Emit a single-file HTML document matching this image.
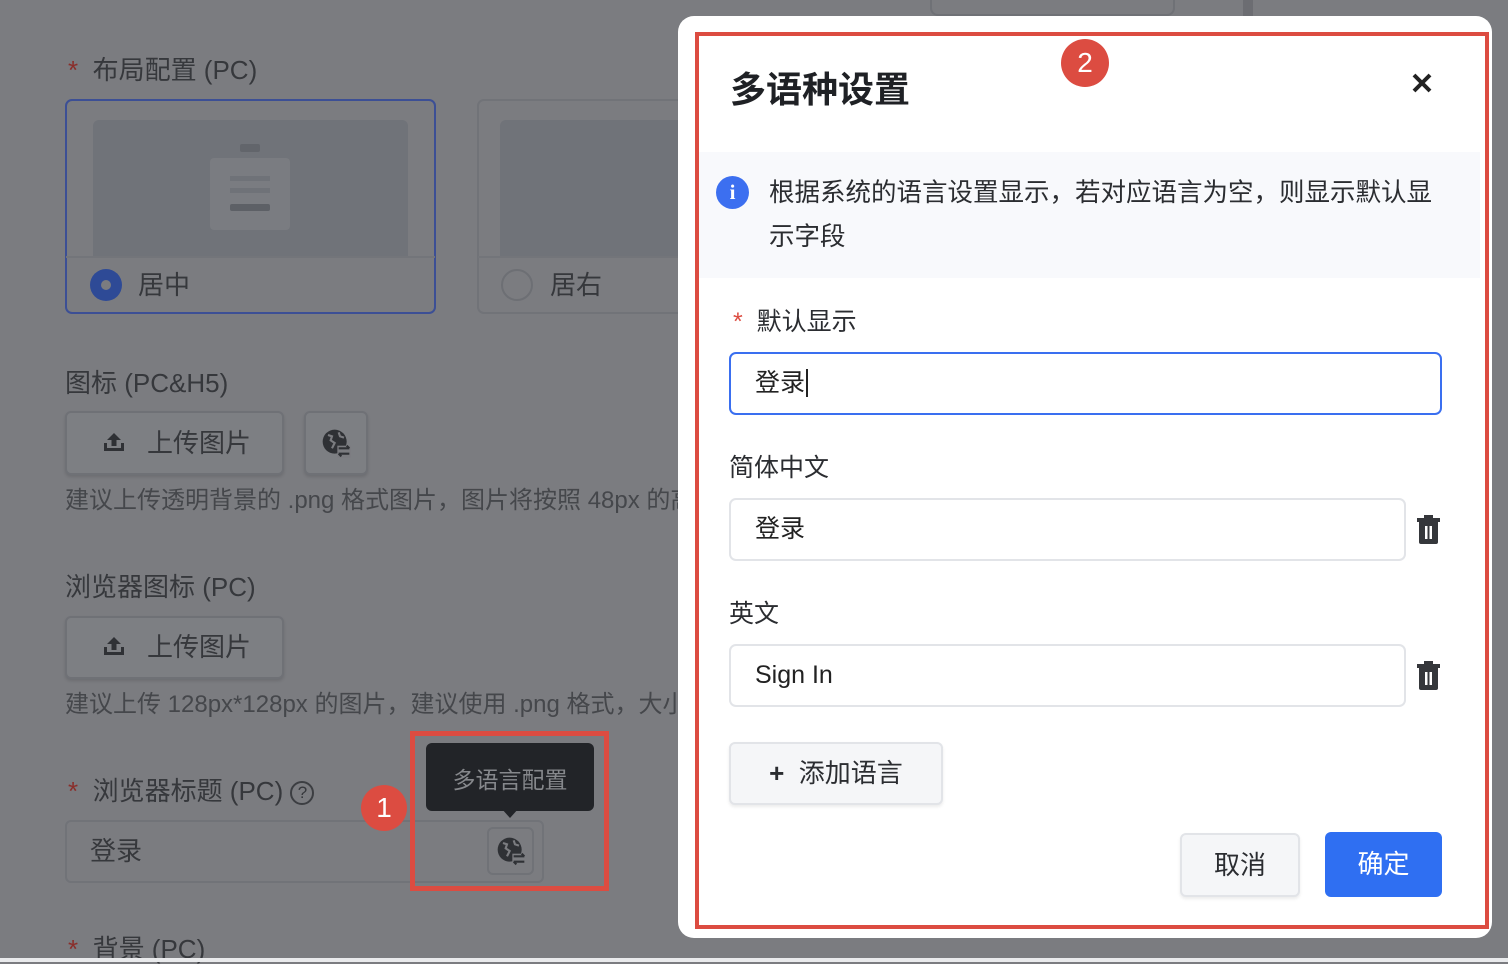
<!DOCTYPE html>
<html><head><meta charset="utf-8"><style>
*{box-sizing:border-box;margin:0;padding:0}
body{width:1508px;height:962px;overflow:hidden;background:#7b7c80;font-family:"Liberation Sans","Noto Sans CJK SC",sans-serif;position:relative;color:#34363a}
.a{position:absolute;white-space:nowrap}
.lbl{font-size:25px;color:#36383c;line-height:30px}
.star{color:#8a2e2a}
.btn{position:absolute;border:2px solid #6f7176;border-radius:6px;background:#7d7f83;box-shadow:0 2px 3px rgba(0,0,0,.12)}
.help{font-size:23px;color:#45474b;line-height:28px}
.m{position:absolute;left:678px;top:16px;width:814px;height:922px;background:#fff;border-radius:16px}
.mf{font-size:25px;color:#2b2d31;line-height:30px}
.inp{position:absolute;left:729px;width:677px;height:63px;border:2px solid #e2e4e8;border-radius:7px;font-size:25px;color:#222;padding-left:24px;line-height:59px}
</style></head><body>
<div class="a" style="left:930px;top:0;width:245px;height:16px;border:2px solid #6f7176;border-top:none;border-radius:0 0 8px 8px"></div>
<div class="a" style="left:1243px;top:0;width:10px;height:16px;background:#6c6d72"></div>

<div class="a lbl" style="left:68px;top:55px;font-size:26px"><span class="star">*</span>&nbsp; 布局配置 (PC)</div>
<div class="a" style="left:65px;top:99px;width:371px;height:215px;border:2px solid #3c4f95;border-radius:7px"></div>
<div class="a" style="left:93px;top:120px;width:315px;height:137px;background:#707379;border-radius:6px 6px 0 0"></div>
<div class="a" style="left:240px;top:144px;width:20px;height:8px;background:#62656b;border-radius:2px"></div>
<div class="a" style="left:210px;top:158px;width:80px;height:72px;background:#7a7c81;border-radius:4px"></div>
<div class="a" style="left:230px;top:176px;width:40px;height:5px;background:#6f7278"></div>
<div class="a" style="left:230px;top:188px;width:40px;height:5px;background:#6f7278"></div>
<div class="a" style="left:230px;top:204px;width:40px;height:7px;background:#5d6066;border-radius:2px"></div>
<div class="a" style="left:66px;top:256px;width:369px;height:2px;background:#73757a"></div>
<div class="a" style="left:90px;top:269px;width:32px;height:32px;border-radius:50%;background:#2e4a96"></div>
<div class="a" style="left:101px;top:280px;width:10px;height:10px;border-radius:50%;background:#7b7c80"></div>
<div class="a lbl" style="left:138px;top:270px;font-size:26px">居中</div>
<div class="a" style="left:477px;top:99px;width:260px;height:215px;border:2px solid #717378;border-radius:7px"></div>
<div class="a" style="left:500px;top:120px;width:237px;height:137px;background:#707379;border-radius:6px 0 0 0"></div>
<div class="a" style="left:478px;top:256px;width:259px;height:2px;background:#73757a"></div>
<div class="a" style="left:501px;top:269px;width:32px;height:32px;border-radius:50%;border:2px solid #6d6f74"></div>
<div class="a lbl" style="left:550px;top:270px;font-size:26px">居右</div>

<div class="a lbl" style="left:65px;top:368px;font-size:26px">图标 (PC&amp;H5)</div>
<div class="btn" style="left:65px;top:411px;width:219px;height:64px"></div>
<svg class="a" style="left:102px;top:430px" width="24" height="24" viewBox="0 0 24 24"><path d="M12 3L5 10h4.5v6h5v-6H19z" fill="#2f3135"/><rect x="2" y="18" width="20" height="3" fill="#2f3135"/><rect x="2" y="13" width="3" height="8" fill="#2f3135"/><rect x="19" y="13" width="3" height="8" fill="#2f3135"/></svg>
<div class="a lbl" style="left:147px;top:428px;font-size:26px">上传图片</div>
<div class="btn" style="left:304px;top:411px;width:64px;height:64px"></div>
<svg class="a" style="left:320px;top:427px" width="32" height="32" viewBox="0 0 24 24"><circle cx="11" cy="11" r="9" fill="#2f3135"/><path d="M6 6l3 1-1 3 3 2-2 4M14 4l1 3 3 1" stroke="#7b7c80" stroke-width="1.6" fill="none"/><rect x="13" y="14" width="10" height="9" fill="#7b7c80"/><path d="M14 16h8M14 20h8M20 14l2 2M16 22l-2-2" stroke="#2f3135" stroke-width="1.6" fill="none"/></svg>
<div class="a help" style="left:65px;top:487px;font-size:24px">建议上传透明背景的 .png 格式图片，图片将按照 48px 的高度显示</div>

<div class="a lbl" style="left:65px;top:572px;font-size:26px">浏览器图标 (PC)</div>
<div class="btn" style="left:65px;top:616px;width:219px;height:63px"></div>
<svg class="a" style="left:102px;top:634px" width="24" height="24" viewBox="0 0 24 24"><path d="M12 3L5 10h4.5v6h5v-6H19z" fill="#2f3135"/><rect x="2" y="18" width="20" height="3" fill="#2f3135"/><rect x="2" y="13" width="3" height="8" fill="#2f3135"/><rect x="19" y="13" width="3" height="8" fill="#2f3135"/></svg>
<div class="a lbl" style="left:147px;top:632px;font-size:26px">上传图片</div>
<div class="a help" style="left:65px;top:691px;font-size:24px">建议上传 128px*128px 的图片，建议使用 .png 格式，大小不超过</div>

<div class="a lbl" style="left:68px;top:776px;font-size:26px"><span class="star">*</span>&nbsp; 浏览器标题 (PC) <span style="display:inline-block;width:24px;height:24px;border:2px solid #3c3e42;border-radius:50%;font-size:17px;line-height:20px;text-align:center;vertical-align:2px">?</span></div>
<div class="a" style="left:65px;top:820px;width:479px;height:63px;border:2px solid #717378;border-radius:6px"></div>
<div class="a lbl" style="left:90px;top:836px;font-size:26px">登录</div>
<div class="a" style="left:487px;top:827px;width:47px;height:48px;border:2px solid #707277;border-radius:6px"></div>
<svg class="a" style="left:495px;top:835px" width="32" height="32" viewBox="0 0 24 24"><circle cx="11" cy="11" r="9" fill="#2f3135"/><path d="M6 6l3 1-1 3 3 2-2 4M14 4l1 3 3 1" stroke="#7b7c80" stroke-width="1.6" fill="none"/><rect x="13" y="14" width="10" height="9" fill="#7b7c80"/><path d="M14 16h8M14 20h8M20 14l2 2M16 22l-2-2" stroke="#2f3135" stroke-width="1.6" fill="none"/></svg>
<div class="a" style="left:426px;top:743px;width:168px;height:68px;background:#222428;border-radius:6px"></div>
<div class="a" style="left:501px;top:808px;width:0;height:0;border-left:9px solid transparent;border-right:9px solid transparent;border-top:10px solid #222428"></div>
<div class="a" style="left:426px;top:761px;width:168px;text-align:center;font-size:23px;color:#86888c">多语言配置</div>
<div class="a" style="left:410px;top:731px;width:199px;height:160px;border:5px solid #dc4c41"></div>
<div class="a" style="left:361px;top:785px;width:46px;height:46px;border-radius:50%;background:#dc4c41;color:#fff;font-size:28px;text-align:center;line-height:46px">1</div>
<div class="a lbl" style="left:68px;top:934px;font-size:26px"><span class="star">*</span>&nbsp; 背景 (PC)</div>
<div class="a" style="left:0;top:958px;width:1508px;height:4px;background:#e9eaec"></div>

<div class="m"></div>
<div class="a" style="left:699px;top:152px;width:781px;height:126px;background:#f8f9fc"></div>
<div class="a" style="left:695px;top:32px;width:794px;height:897px;border:4px solid #dc4c41"></div>
<div class="a" style="left:730px;top:61px;font-size:36px;font-weight:bold;color:#1f2125">多语种设置</div>
<div class="a" style="left:1061px;top:39px;width:48px;height:48px;border-radius:50%;background:#dc4c41;color:#fff;font-size:28px;text-align:center;line-height:48px">2</div>
<svg class="a" style="left:1411px;top:72px" width="22" height="22" viewBox="0 0 22 22"><path d="M3 3L19 19M19 3L3 19" stroke="#222" stroke-width="4"/></svg>
<div class="a" style="left:716px;top:176px;width:33px;height:33px;border-radius:50%;background:#3c6ff0;color:#fff;font-size:21px;font-weight:bold;text-align:center;line-height:33px;font-family:'Liberation Serif',serif">i</div>
<div class="a mf" style="left:769px;top:171px;line-height:44px;white-space:normal;width:675px;font-size:25.5px">根据系统的语言设置显示，若对应语言为空，则显示默认显示字段</div>
<div class="a mf" style="left:733px;top:307px"><span style="color:#dc4c41">*</span>&nbsp; 默认显示</div>
<div class="inp" style="top:352px;width:713px;border-color:#3a6ff0">登录<span style="border-left:2px solid #222;margin-left:1px"></span></div>
<div class="a mf" style="left:729px;top:453px">简体中文</div>
<div class="inp" style="top:498px">登录</div>
<div class="a mf" style="left:729px;top:599px">英文</div>
<div class="inp" style="top:644px">Sign In</div>
<svg class="a" style="left:1416px;top:515px" width="25" height="30" viewBox="0 0 25 30"><rect x="1" y="3" width="23" height="4" fill="#35373b"/><rect x="8" y="0" width="9" height="4" fill="#35373b"/><path d="M3 7h19v20a2 2 0 0 1-2 2H5a2 2 0 0 1-2-2z" fill="#35373b"/><rect x="9" y="11" width="2.5" height="13" fill="#fff"/><rect x="13.5" y="11" width="2.5" height="13" fill="#fff"/></svg>
<svg class="a" style="left:1416px;top:661px" width="25" height="30" viewBox="0 0 25 30"><rect x="1" y="3" width="23" height="4" fill="#35373b"/><rect x="8" y="0" width="9" height="4" fill="#35373b"/><path d="M3 7h19v20a2 2 0 0 1-2 2H5a2 2 0 0 1-2-2z" fill="#35373b"/><rect x="9" y="11" width="2.5" height="13" fill="#fff"/><rect x="13.5" y="11" width="2.5" height="13" fill="#fff"/></svg>
<div class="a" style="left:729px;top:742px;width:214px;height:63px;background:#f5f6f8;border:2px solid #e2e4e8;border-radius:6px;box-shadow:0 2px 3px rgba(0,0,0,.08);font-size:26px;line-height:59px;text-align:center;color:#2b2d31"><b>+</b>&nbsp; 添加语言</div>
<div class="a" style="left:1180px;top:833px;width:120px;height:64px;background:#f5f6f8;border:2px solid #e2e4e8;border-radius:6px;box-shadow:0 2px 3px rgba(0,0,0,.08);font-size:26px;line-height:60px;text-align:center;color:#2b2d31">取消</div>
<div class="a" style="left:1325px;top:832px;width:117px;height:65px;background:#2f6ff2;border-radius:6px;font-size:26px;line-height:65px;text-align:center;color:#fff">确定</div>
</body></html>
